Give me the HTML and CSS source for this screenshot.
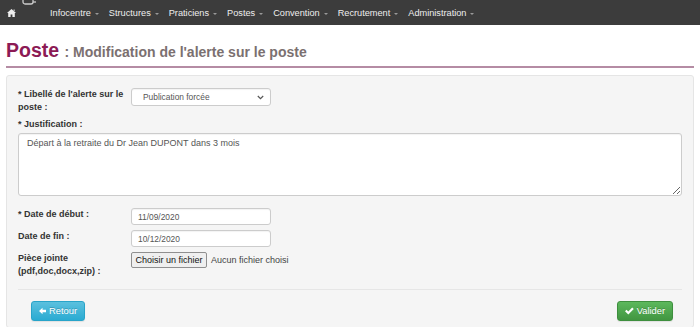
FILE: index.html
```html
<!DOCTYPE html>
<html lang="fr">
<head>
    <meta charset="UTF-8">
    <title>Poste - Modification de l'alerte</title>
    <link rel="stylesheet" href="styles.css">
</head>
<body>
<nav class="top-nav">
    <span class="brand-icon">
        <svg width="16" height="6" viewBox="0 0 16 6"><rect x="1" y="-5" width="10" height="9" rx="2" fill="none" stroke="#ccc" stroke-width="1.3"/><path d="M11 2 L14 2" stroke="#ccc" stroke-width="1.3"/></svg>
    </span>
    <a class="home-link" href="#">
        <svg width="9" height="8" viewBox="0 0 9 8"><path d="M4.5 0 L9 4 L7.8 4 L7.8 8 L5.4 8 L5.4 5.6 L3.6 5.6 L3.6 8 L1.2 8 L1.2 4 L0 4 Z M6.6 0.4 L7.6 0.4 L7.6 2.2 L6.6 1.4 Z" fill="#eee"/></svg>
    </a>
    <ul class="menu">
        <li>Infocentre<span class="caret"></span></li>
        <li>Structures<span class="caret"></span></li>
        <li>Praticiens<span class="caret"></span></li>
        <li>Postes<span class="caret"></span></li>
        <li>Convention<span class="caret"></span></li>
        <li>Recrutement<span class="caret"></span></li>
        <li>Administration<span class="caret"></span></li>
    </ul>
</nav>

<div class="page">
    <h1 class="page-title">Poste <small>: Modification de l'alerte sur le poste</small></h1>

    <form class="panel">
        <div class="form-row first">
            <label>* Libellé de l'alerte sur le poste :</label>
            <span class="select-wrap">
                <select class="field">
                    <option>Publication forcée</option>
                </select>
                <svg class="chevron" width="7" height="5" viewBox="0 0 7 5"><path d="M0.8 1 L3.5 3.6 L6.2 1" fill="none" stroke="#555" stroke-width="1.2"/></svg>
            </span>
        </div>
        <div class="form-block">
            <label>* Justification :</label>
            <textarea class="text-area">Départ à la retraite du Dr Jean DUPONT dans 3 mois</textarea>
        </div>
        <div class="form-row">
            <label>* Date de début :</label>
            <input class="field" type="text" value="11/09/2020">
        </div>
        <div class="form-row">
            <label>Date de fin :</label>
            <input class="field" type="text" value="10/12/2020">
        </div>
        <div class="form-row">
            <label>Pièce jointe (pdf,doc,docx,zip) :</label>
            <div class="file-line"><button type="button" class="file-btn">Choisir un fichier</button><span>Aucun fichier choisi</span></div>
        </div>
        <hr class="sep">
        <div class="actions">
            <button type="button" class="btn btn-info">
                <svg width="8" height="8" viewBox="0 0 8 8"><path d="M0 4 L4 0.2 L4 2.6 L8 2.6 L8 5.4 L4 5.4 L4 7.8 Z" fill="#fff"/></svg>
                Retour
            </button>
            <button type="button" class="btn btn-success">
                <svg width="9" height="8" viewBox="0 0 9 8"><path d="M0 4.2 L1.6 2.6 L3.4 4.4 L7.4 0.4 L9 2 L3.4 7.6 Z" fill="#fff"/></svg>
                Valider
            </button>
        </div>
    </form>
</div>
</body>
</html>
```

FILE: styles.css
```css
body {
    margin: 0;
    font-family: "Liberation Sans", Arial, sans-serif;
    background-color: #fff;
    color: #333;
}
.top-nav {
    height: 25px;
    background-color: #3c3c3c;
    display: flex;
    align-items: center;
    position: relative;
    font-size: 9.2px;
}
.brand-icon {
    position: absolute;
    left: 22px;
    top: 0;
    line-height: 0;
}
.home-link {
    width: 43px;
    padding-left: 7px;
    line-height: 0;
    margin-top: 1px;
}
.menu {
    list-style: none;
    margin: 0;
    padding: 0;
    display: flex;
    color: #eee;
    margin-top: 1px;
}
.menu li {
    margin-right: 10px;
}
.caret {
    display: inline-block;
    vertical-align: middle;
    margin-left: 4px;
    border-top: 2px solid #999;
    border-left: 2.5px solid transparent;
    border-right: 2.5px solid transparent;
}
.page {
    padding: 0 6px;
}
.page-title {
    margin: 14px 0 0 0;
    padding-bottom: 3px;
    border-bottom: 2px solid #b58ca4;
    font-size: 19.5px;
    color: #8c1a55;
    line-height: 22px;
}
.page-title small {
    font-size: 14px;
    color: #7b7070;
}
.panel {
    margin-top: 7px;
    background-color: #f5f5f5;
    border: 1px solid #e5e5e5;
    border-radius: 3px;
    padding: 12px 11px 6px 11px;
    font-size: 9px;
}
.form-row {
    display: flex;
    align-items: flex-start;
    margin-bottom: 5px;
}
.form-row.first {
    margin-bottom: 4px;
}
.form-row label, .form-block label {
    font-weight: bold;
    line-height: 13px;
    color: #333;
}
.form-row label {
    width: 113px;
    flex: none;
}
.form-block {
    margin-bottom: 12px;
}
.form-block label {
    display: block;
    margin-bottom: 2px;
}
.field {
    width: 140px;
    height: 17px;
    box-sizing: border-box;
    border: 1px solid #ccc;
    border-radius: 3px;
    background-color: #fff;
    box-shadow: inset 0 1px 1px rgba(0, 0, 0, 0.05);
    font-family: inherit;
    font-size: 8.4px;
    color: #555;
    padding: 0 6px;
}
.select-wrap {
    position: relative;
    line-height: 0;
}
select.field {
    height: 18px;
    padding: 0 4px 0 11px;
    appearance: none;
    -webkit-appearance: none;
}
.chevron {
    position: absolute;
    right: 7px;
    top: 7px;
    pointer-events: none;
}
.text-area {
    display: block;
    width: 100%;
    height: 63px;
    box-sizing: border-box;
    border: 1px solid #ccc;
    border-radius: 3px;
    box-shadow: inset 0 1px 1px rgba(0, 0, 0, 0.05);
    font-family: inherit;
    font-size: 9px;
    color: #555;
    padding: 4px 8px;
    resize: vertical;
}
.file-line {
    display: flex;
    align-items: center;
    gap: 4px;
    font-size: 9px;
    color: #444;
}
.file-btn {
    width: 76px;
    height: 16px;
    font-family: inherit;
    font-size: 9px;
    padding: 0;
    border: 1px solid #8f8f8f;
    border-radius: 2px;
    background-color: #efefef;
    color: #111;
}
.sep {
    border: 0;
    border-top: 1px solid #e6e6e6;
    margin: 11px 0 11px 0;
}
.actions {
    display: flex;
    justify-content: space-between;
    padding: 0 9px 0 13px;
}
.btn {
    display: flex;
    align-items: center;
    gap: 3px;
    font-family: inherit;
    font-size: 9.3px;
    color: #fff;
    height: 20px;
    padding: 0 7px;
    border-radius: 3px;
    text-shadow: 0 -1px 0 rgba(0, 0, 0, 0.2);
    box-shadow: 0 1px 1px rgba(0, 0, 0, 0.08);
}
.btn-info {
    width: 54px;
    background-image: linear-gradient(#5bc0de, #2aabd2);
    border: 1px solid #28a4c9;
}
.btn-success {
    width: 56px;
    background-image: linear-gradient(#5cb85c, #419641);
    border: 1px solid #3e8f3e;
}
```
